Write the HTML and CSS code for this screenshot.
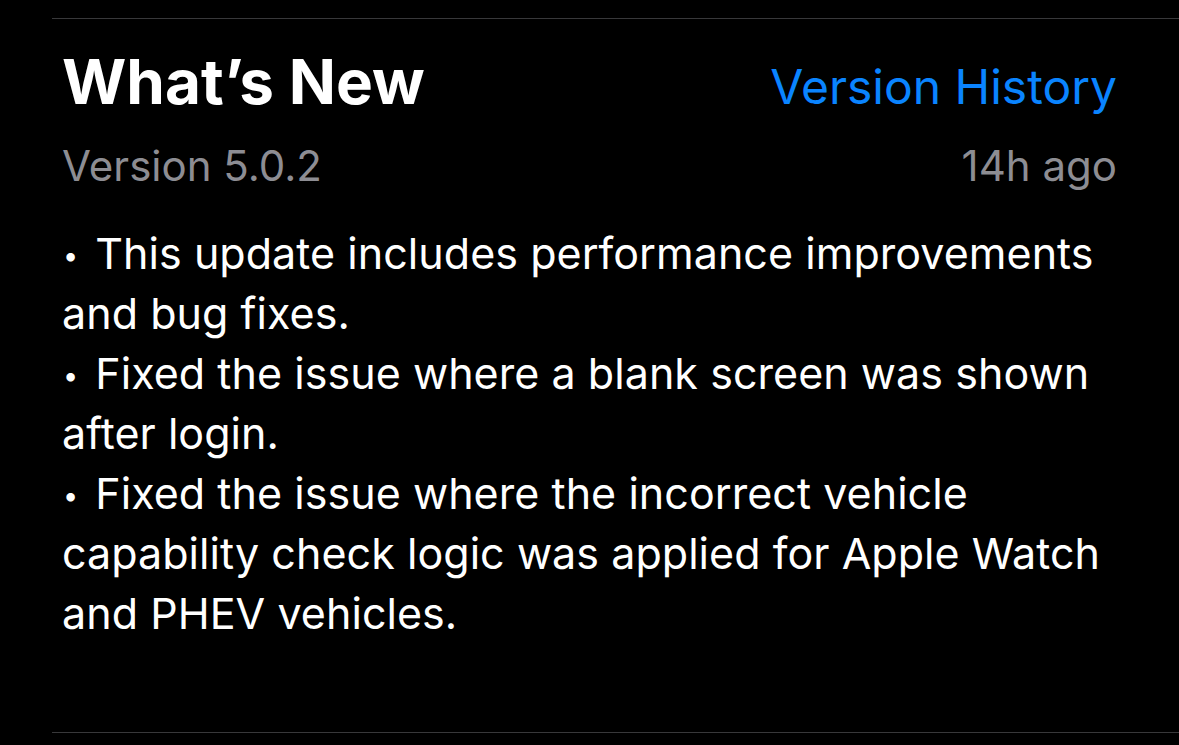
FILE: index.html
```html
<!DOCTYPE html>
<html>
<head>
<meta charset="utf-8">
<link rel="stylesheet" href="styles.css">
</head>
<body>
<section class="whats-new">
  <div class="content">
    <div class="header-row">
      <h2 class="title">What’s New</h2>
      <a class="link">Version History</a>
    </div>
    <div class="meta-row">
      <span class="version">Version 5.0.2</span>
      <span class="date">14h ago</span>
    </div>
    <ul class="notes">
      <li>This update includes performance improvements and bug fixes.</li>
      <li>Fixed the issue where a blank screen was shown after login.</li>
      <li>Fixed the issue where the incorrect vehicle capability check logic was applied for Apple Watch and PHEV vehicles.</li>
    </ul>
  </div>
</section>
</body>
</html>
```

FILE: styles.css
```css
html, body {
  margin: 0;
  padding: 0;
  background: #000;
}
body {
  font-family: Inter, "Noto Sans", sans-serif;
  color: #fff;
  width: 1179px;
  height: 745px;
  overflow: hidden;
}
.whats-new {
  margin: 18px 0 0 52px;
  border-top: 1px solid #38383a;
  border-bottom: 1px solid #38383a;
  height: 715px;
  box-sizing: border-box;
}
.content {
  padding: 0 62px 0 10px;
}
.header-row {
  display: flex;
  justify-content: space-between;
  align-items: baseline;
  height: 122px;
}
.title {
  margin: 0;
  font-size: 62px;
  font-weight: 700;
  line-height: 126px;
  letter-spacing: 0;
}
.link {
  font-size: 48px;
  color: #0a84ff;
  line-height: 124px;
}
.meta-row {
  display: flex;
  justify-content: space-between;
  align-items: baseline;
  font-size: 42px;
  color: #8d8d93;
  line-height: 50px;
}
.notes {
  list-style: none;
  margin: 32px 0 0;
  padding: 0;
  font-size: 43px;
  line-height: 60px;
  letter-spacing: 0.05px;
}
.notes li::before {
  content: "•";
  font-size: 27px;
  line-height: 0;
  vertical-align: 0.14em;
  margin: 0 17px 0 1px;
}
```
